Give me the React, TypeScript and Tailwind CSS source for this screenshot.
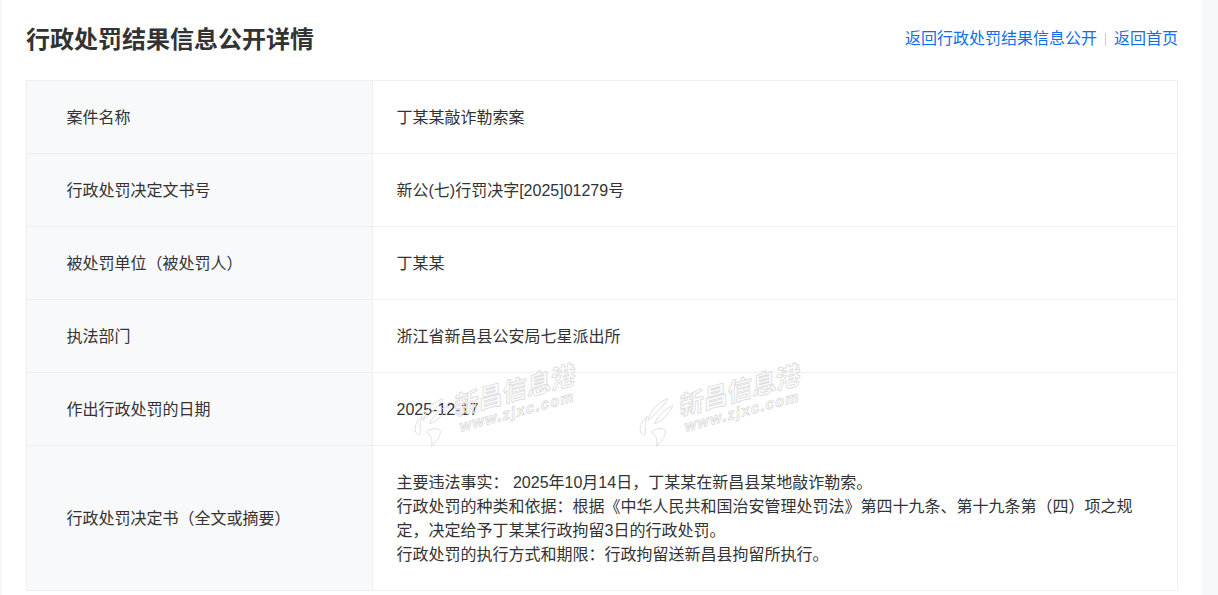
const FONT = "font-['Liberation_Sans','Noto_Sans_CJK_SC',sans-serif]";

function Row({ label, children, tall }: { label: string; children: React.ReactNode; tall?: boolean }) {
  return (
    <div className={`flex border-b border-[#eef0f3] last:border-b-0 ${tall ? "h-[144px]" : "h-[73px]"}`}>
      <div className="w-[346px] shrink-0 bg-[#f8f9fb] border-r border-[#eef0f3] pl-[39.5px] pt-[2px] flex items-center text-[16px] text-[#333]">
        {label}
      </div>
      <div className="flex-1 pl-[23.5px] pr-[40px] pt-[2px] flex items-center text-[16px] text-[#333] leading-[24px]">
        <div>{children}</div>
      </div>
    </div>
  );
}

function Watermark({ className }: { className: string }) {
  return (
    <div className={`absolute pointer-events-none ${className}`}>
      <svg width="35" height="50" viewBox="0 0 105 150" fill="none" stroke="#e0e0e0" strokeWidth="3" className="absolute left-[0px] top-[30px]">
        <path d="M90 5C65 12 40 35 30 70C45 58 75 30 90 5Z" />
        <path d="M105 25C85 35 60 55 50 80C70 75 95 50 105 25Z" />
        <path d="M28 58C12 70 2 90 8 105C15 118 25 115 22 100C20 85 22 70 28 58Z" />
        <path d="M40 105C55 92 80 92 82 102C84 118 65 140 55 148C60 130 55 115 40 105Z" />
      </svg>
      <div className="absolute left-[39px] top-[11px] w-[130px] flex flex-col items-center font-bold -rotate-[15deg] -skew-x-[14deg]">
        <span className="text-[25px] leading-[25px] -ml-[4px] whitespace-nowrap text-transparent [-webkit-text-stroke:1px_#e0e0e0]">新昌信息港</span>
        <span className="text-[15px] leading-[15px] tracking-[1.4px] whitespace-nowrap text-transparent [-webkit-text-stroke:0.8px_#dadada]">www.zjxc.com</span>
      </div>
    </div>
  );
}

export default function App() {
  return (
    <div className={`h-[595px] overflow-hidden bg-[#f7f8fa] pl-[2px] pr-[16px] ${FONT}`}>
      <div className="relative h-[595px] bg-white px-[24px]">
        <div className="h-[80px] flex justify-between">
          <h1 className="text-[24px] font-bold text-[#333] leading-[32px] pt-[24px] h-[56px]">行政处罚结果信息公开详情</h1>
          <div className="flex items-center text-[16px] text-[#0f6fec] h-[78px]">
            <span>返回行政处罚结果信息公开</span>
            <span className="w-px h-[13px] bg-[#ccc] mx-[8px]"></span>
            <span>返回首页</span>
          </div>
        </div>
        <div className="border border-[#eef0f3] h-[511px] overflow-hidden">
          <Row label="案件名称">丁某某敲诈勒索案</Row>
          <Row label="行政处罚决定文书号">新公(七)行罚决字[2025]01279号</Row>
          <Row label="被处罚单位（被处罚人）">丁某某</Row>
          <Row label="执法部门">浙江省新昌县公安局七星派出所</Row>
          <Row label="作出行政处罚的日期">2025-12-17</Row>
          <Row label="行政处罚决定书（全文或摘要）" tall>
            <p>主要违法事实： 2025年10月14日，丁某某在新昌县某地敲诈勒索。</p>
            <p>行政处罚的种类和依据：根据《中华人民共和国治安管理处罚法》第四十九条、第十九条第（四）项之规定，决定给予丁某某行政拘留3日的行政处罚。</p>
            <p>行政处罚的执行方式和期限：行政拘留送新昌县拘留所执行。</p>
          </Row>
        </div>
        <Watermark className="left-[411px] top-[367px]" />
        <Watermark className="left-[636px] top-[367px]" />
      </div>
    </div>
  );
}
